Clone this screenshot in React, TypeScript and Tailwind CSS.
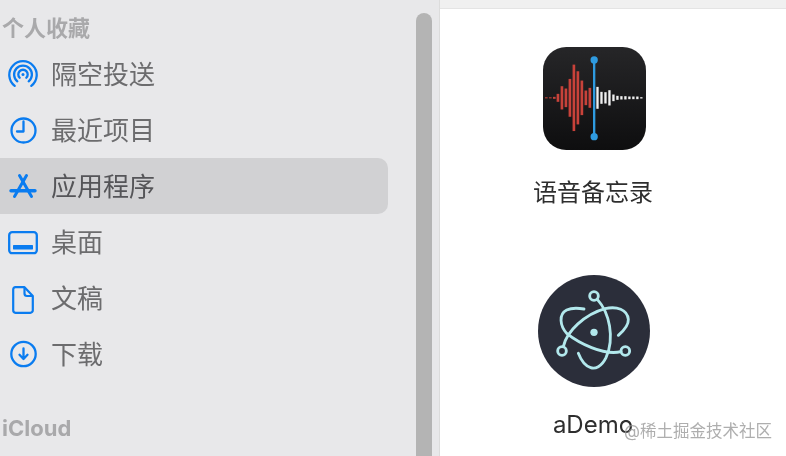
import type { ReactNode } from 'react';

const BLUE = '#0a7cf0';

// waveform bars of the voice memos icon: x, half height
const redBars = [
  [78, 1.5], [90, 1.5], [102, 3], [113, 12], [125, 35], [137, 28], [149, 57], [161, 100],
  [173, 80], [185, 52], [197, 22], [209, 30],
];
const whiteBars = [
  [232, 33], [244, 18], [256, 17], [268, 23], [280, 10], [292, 6], [304, 5], [316, 5],
  [328, 4], [340, 4], [352, 4], [364, 2],
];

function VoiceMemosIcon() {
  return (
    <svg width="103" height="103" viewBox="68 52 310 310">
      <defs>
        <linearGradient id="vm" x1="0" y1="0" x2="0" y2="1">
          <stop offset="0" stopColor="#262628" />
          <stop offset="1" stopColor="#0e0e0f" />
        </linearGradient>
      </defs>
      <rect x="68" y="52" width="310" height="310" rx="70" fill="url(#vm)" />
      {redBars.map(([x, h]) => (
        <rect key={x} x={x - 4} y={205 - h} width="8" height={h * 2} fill="#c8423a" />
      ))}
      {whiteBars.map(([x, h]) => (
        <rect key={x} x={x - 3.5} y={205 - h} width="7" height={h * 2} fill="#f0f0f0" />
      ))}
      <rect x="218.5" y="92" width="7" height="230" fill="#2f9be0" />
      <circle cx="222" cy="91" r="11" fill="#2f9be0" />
      <circle cx="222" cy="322" r="11" fill="#2f9be0" />
    </svg>
  );
}

function ElectronIcon() {
  return (
    <svg width="112" height="112" viewBox="54 47 336 336">
      <circle cx="222" cy="215" r="168" fill="#2b2e3a" />
      <g fill="none" stroke="#b2e8ec" strokeWidth="8.5" strokeLinecap="round">
        <path d="M232 120C268 160 285 235 258 295C245 322 225 330 212 325C195 320 182 300 175 282" />
        <path d="M130 262C140 215 195 165 255 148C290 140 322 150 325 180C326 195 310 215 295 228" />
        <path d="M303 277C250 290 175 250 140 222C120 200 115 165 140 152C155 145 175 146 192 149" />
        <circle cx="222" cy="110" r="13" />
        <circle cx="126" cy="275" r="13" />
        <circle cx="316" cy="275" r="13" />
      </g>
      <circle cx="222" cy="219" r="11" fill="#b2e8ec" />
    </svg>
  );
}

function AirDropIcon() {
  return (
    <svg width="30" height="30" viewBox="0 0 30 30" fill="none" stroke={BLUE} strokeWidth="2.3" strokeLinecap="round">
      <path d="M6.7 26.8A13.7 13.7 0 1 1 23.3 26.8" />
      <path d="M9.3 22.3A8.9 8.9 0 1 1 20.7 22.3" />
      <path d="M11.7 18.8A4.7 4.7 0 1 1 18.3 18.8" />
      <circle cx="15" cy="15.5" r="1.5" fill={BLUE} stroke="none" />
    </svg>
  );
}

function ClockIcon() {
  return (
    <svg width="28" height="28" viewBox="0 0 28 28" fill="none" stroke={BLUE} strokeWidth="2.3" strokeLinecap="round" strokeLinejoin="round">
      <circle cx="14.5" cy="14.5" r="12" />
      <path d="M14.5 5.5V15.5H8" />
    </svg>
  );
}

function AppsIcon() {
  return (
    <svg width="28" height="28" viewBox="0 0 28 28" fill="none" stroke={BLUE} strokeLinecap="round">
      <path d="M17.5 3.5L5.5 24.5" strokeWidth="3" />
      <path d="M10.5 3.5L22.5 24.5" strokeWidth="3" />
      <path d="M2 18.8H26" strokeWidth="3.4" />
    </svg>
  );
}

function DesktopIcon() {
  return (
    <svg className="mt-[2px]" width="30" height="24" viewBox="0 0 30 24" fill="none">
      <rect x="1.2" y="1.2" width="27.6" height="21" rx="3" stroke={BLUE} strokeWidth="2.3" />
      <rect x="5" y="14" width="20" height="4.4" rx="0.6" fill={BLUE} />
    </svg>
  );
}

function DocIcon() {
  return (
    <svg className="mt-[3px]" width="22" height="28" viewBox="0 0 22 28" fill="none" stroke={BLUE} strokeWidth="2.2" strokeLinejoin="round">
      <path d="M3.5 1.2H12.5L20.8 10V24.3A2.5 2.5 0 0 1 18.3 26.8H3.5A2.5 2.5 0 0 1 1.2 24.3V3.5A2.5 2.5 0 0 1 3.5 1.2Z" />
      <path d="M12.5 1.2V7.5A2.5 2.5 0 0 0 15 10H20.8" />
    </svg>
  );
}

function DownloadIcon() {
  return (
    <svg width="28" height="28" viewBox="0 0 28 28" fill="none" stroke={BLUE} strokeWidth="2.3" strokeLinecap="round" strokeLinejoin="round">
      <circle cx="14.5" cy="14" r="12.2" />
      <path d="M14.5 8.5V18.5M10.5 14.8L14.5 19L18.5 14.8" />
    </svg>
  );
}

function SidebarRow({ icon, label, selected }: { icon: ReactNode; label: string; selected?: boolean }) {
  return (
    <div className={selected ? 'flex h-[56px] w-[388px] items-center rounded-r-[10px] bg-[#d1d1d3] text-[#555558]' : 'flex h-[56px] w-[388px] items-center text-[#6c6c6e]'}>
      <div className="flex w-[45px] shrink-0 items-center justify-center">{icon}</div>
      <span className="mt-[2px] ml-[6px] text-[26px] leading-[36px]">{label}</span>
    </div>
  );
}

export default function App() {
  return (
    <div className="relative flex h-[456px] w-[786px] overflow-hidden bg-white font-['Inter','Noto_Sans_CJK_SC',sans-serif] blur-[0.4px]">
      {/* sidebar */}
      <aside className="flex w-[440px] shrink-0 border-r border-[#dcdcdc] bg-[#e8e8ea]">
        <div className="w-[416px] shrink-0">
          <div className="mt-[10px] h-[36px] pl-[2px] text-[22px] leading-[36px] font-bold text-[#a9a9ab]">个人收藏</div>
          <SidebarRow icon={<AirDropIcon />} label="隔空投送" />
          <SidebarRow icon={<ClockIcon />} label="最近项目" />
          <SidebarRow icon={<AppsIcon />} label="应用程序" selected />
          <SidebarRow icon={<DesktopIcon />} label="桌面" />
          <SidebarRow icon={<DocIcon />} label="文稿" />
          <SidebarRow icon={<DownloadIcon />} label="下载" />
          <div className="mt-[28px] h-[36px] pl-[2px] text-[22px] leading-[36px] font-bold text-[#a9a9ab]">iCloud</div>
        </div>
        <div className="mt-[13px] w-[16px] rounded-t-full bg-[#b4b4b4]" />
      </aside>

      {/* file list */}
      <main className="flex-1">
        <div className="h-[9px] border-b border-[#e4e4e4] bg-[#f0f0f0]" />
        <div className="ml-[54px] flex w-[200px] flex-col items-center">
          <div className="mt-[38px]">
            <VoiceMemosIcon />
          </div>
          <div className="mt-[25px] mr-[2px] h-[36px] text-[24px] leading-[36px] text-[#2e2e2e]">语音备忘录</div>
          <div className="mt-[64px]">
            <ElectronIcon />
          </div>
          <div className="mt-[20px] mr-[2px] h-[36px] text-[24px] leading-[36px] text-[#2e2e2e]">aDemo</div>
        </div>
      </main>

      {/* watermark */}
      <div className="absolute top-[420px] left-[624px] text-[16.5px] leading-[22px] whitespace-nowrap text-[#9a9a9a]/80">@稀土掘金技术社区</div>
    </div>
  );
}
